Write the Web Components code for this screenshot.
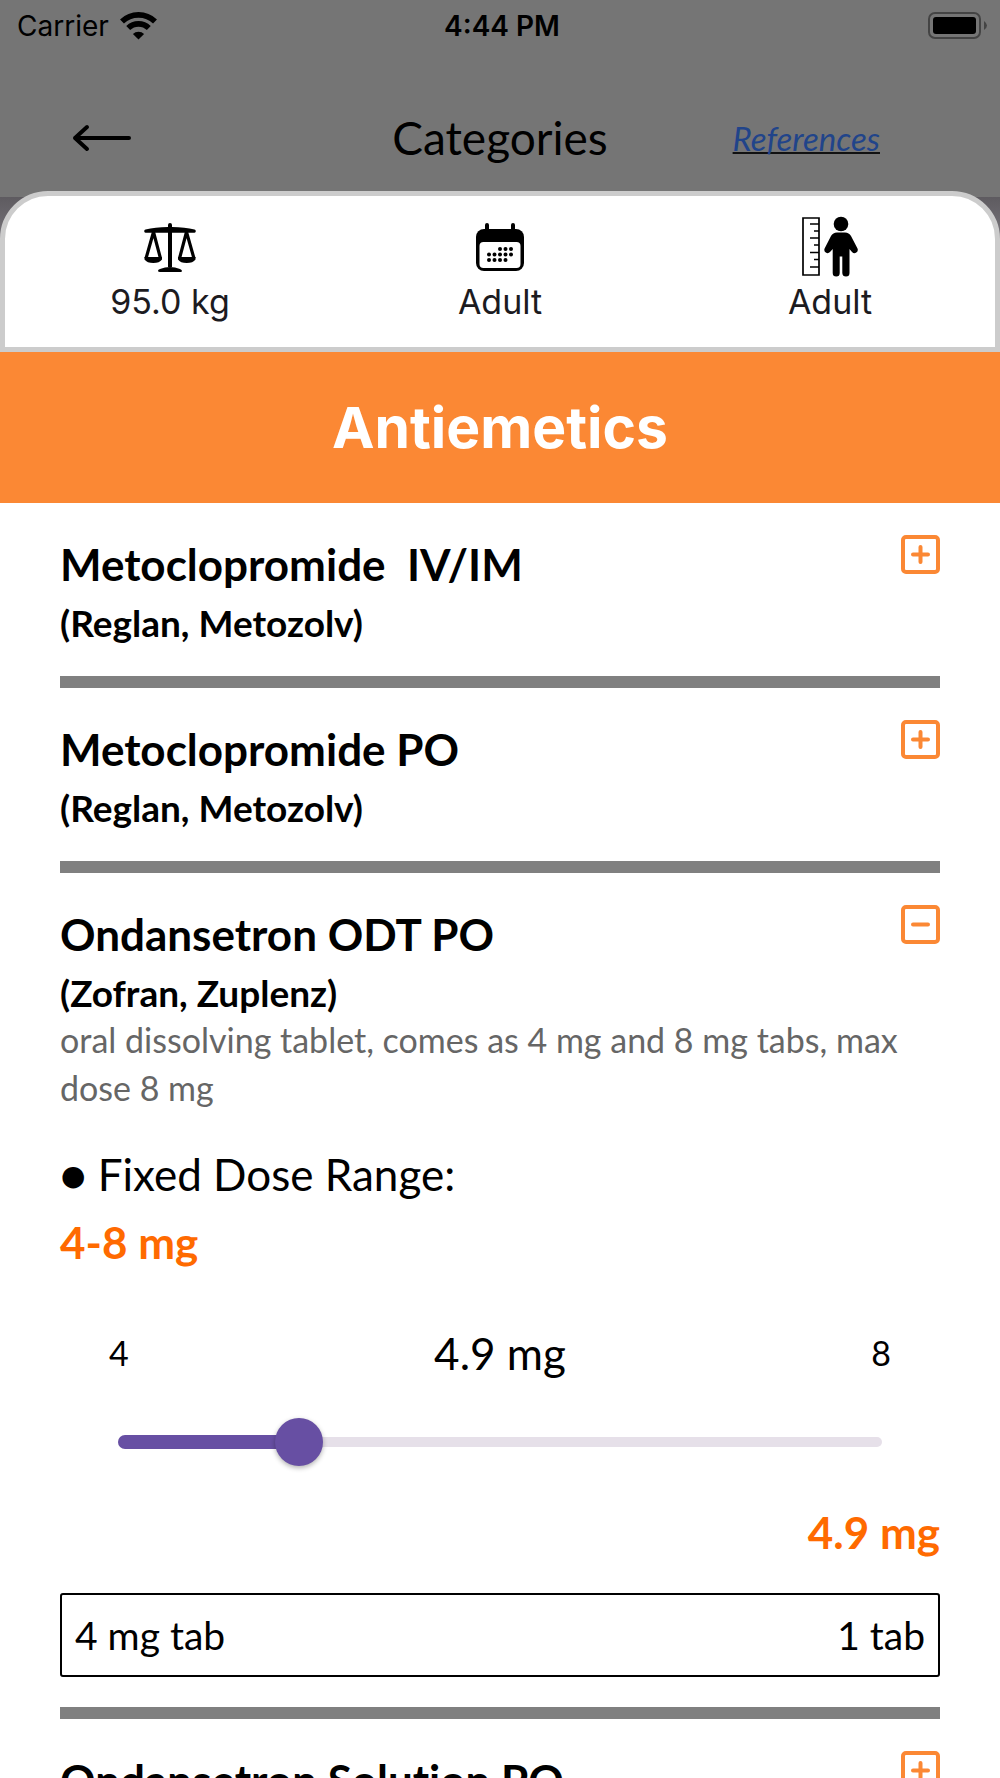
<!DOCTYPE html>
<html lang="en">
<head>
<meta charset="utf-8">
<meta name="viewport" content="width=device-width, initial-scale=1">
<title>Antiemetics</title>
<style>
  body {
    margin: 0;
    height: 100vh;
    display: flex;
    flex-direction: column;
    overflow: hidden;
    background: #fff;
    color: #000;
    font-family: Lato, "Liberation Sans", sans-serif;
    font-variant-ligatures: none;
    --accent: #fb8834;
    --dose: #ff6a00;
    --scrim: #757575;
    --slider: #674fa3;
  }
  main {
    flex: 1;
    min-height: 0;
    overflow-y: auto;
    scrollbar-width: none;
    padding: 0 60px;
  }
</style>
</head>
<body>
  <status-bar carrier="Carrier" time="4:44 PM"></status-bar>
  <nav-header heading="Categories"></nav-header>
  <patient-bar>
    <patient-stat icon="scale">95.0 kg</patient-stat>
    <patient-stat icon="calendar">Adult</patient-stat>
    <patient-stat icon="height">Adult</patient-stat>
  </patient-bar>
  <category-banner>Antiemetics</category-banner>
  <main>
    <drug-item name="Metoclopromide&nbsp; IV/IM" brands="(Reglan, Metozolv)"></drug-item>
    <drug-item name="Metoclopromide PO" brands="(Reglan, Metozolv)"></drug-item>
    <drug-item name="Ondansetron ODT PO" brands="(Zofran, Zuplenz)" open>
      <dose-range low="4" high="8" value="4.875" unit="mg" tab="4 mg tab" count="1 tab">
        oral dissolving tablet, comes as 4 mg and 8 mg tabs, max dose 8 mg
      </dose-range>
    </drug-item>
    <drug-item name="Ondansetron Solution PO" brands="(Zofran)"></drug-item>
  </main>

<script>
class StatusBar extends HTMLElement {
  constructor() {
    super();
    this.root = this.attachShadow({ mode: "open" });
  }

  connectedCallback() {
    this.root.innerHTML = `
      <style>
        :host {
          display: grid;
          grid-template-columns: 1fr auto 1fr;
          align-items: center;
          height: 51px;
          padding: 0 13px 0 17px;
          background: var(--scrim);
          font: 400 28px/32px Inter, "Liberation Sans", sans-serif;
        }
        .carrier { display: flex; align-items: center; gap: 11px; }
        .time { font-weight: 600; }
        .battery { justify-self: end; }
        svg { display: block; }
      </style>
      <div class="carrier">
        <span>${this.getAttribute("carrier")}</span>
        <svg width="37" height="28" viewBox="0 0 37 28" aria-hidden="true">
          <g fill="none" stroke="#000" stroke-width="5.6">
            <path d="M2 9.6a23.6 23.6 0 0 1 33 0"/>
            <path d="M8.2 16a14.8 14.8 0 0 1 20.600 0"/>
          </g>
          <path d="M18.500 27.500l-5.600-5.400a8 8 0 0 1 11.200 0z"/>
        </svg>
      </div>
      <span class="time">${this.getAttribute("time")}</span>
      <svg class="battery" width="59" height="28" viewBox="0 0 59 28" aria-hidden="true">
        <rect x="1" y="1" width="51" height="25" rx="6" fill="none" stroke="#444" stroke-width="2"/>
        <rect x="5" y="5" width="43" height="17" rx="3"/>
        <path d="M56 9q6 4.500 0 9z" fill="#444"/>
      </svg>`;
  }
}

class NavHeader extends HTMLElement {
  constructor() {
    super();
    this.root = this.attachShadow({ mode: "open" });
  }

  connectedCallback() {
    this.root.innerHTML = `
      <style>
        :host {
          display: grid;
          grid-template-columns: 1fr auto 1fr;
          align-items: center;
          height: 140px;
          padding: 34px 60px 0;
          box-sizing: border-box;
          background: var(--scrim);
        }
        button {
          justify-self: start;
          padding: 10px 12px;
          border: 0;
          background: none;
        }
        svg { display: block; }
        h1 { margin: 0; font-size: 46px; font-weight: 400; line-height: 56px; }
        a {
          justify-self: end;
          margin-right: 60px;
          font-size: 33px;
          font-style: italic;
          line-height: 40px;
          color: #21448a;
          text-decoration: underline #111 2px;
          text-underline-offset: 1px;
          text-decoration-skip-ink: none;
        }
      </style>
      <button type="button" aria-label="Back">
        <svg width="60" height="28" viewBox="0 0 60 28" fill="none" stroke="#000" stroke-width="4"
             stroke-linecap="round" stroke-linejoin="round">
          <path d="M3 14h54M15 3L3 14l12 11"/>
        </svg>
      </button>
      <h1>${this.getAttribute("heading")}</h1>
      <a href="#references">References</a>`;
  }
}

class PatientBar extends HTMLElement {
  constructor() {
    super();
    this.root = this.attachShadow({ mode: "open" });
    this.root.innerHTML = `
      <style>
        :host {
          display: block;
          background: linear-gradient(var(--scrim) 6px, #5e5b60 6px, #77747a 48px);
        }
        .sheet {
          display: grid;
          grid-template-columns: repeat(3, 1fr);
          padding: 19px 0 22px;
          border: 5px solid #ccc;
          border-radius: 48px 48px 0 0;
          background: #fff;
        }
      </style>
      <div class="sheet"><slot></slot></div>`;
  }
}

const STAT_ICONS = {
  scale: `
    <svg width="60" height="64" viewBox="0 0 60 64" aria-hidden="true">
      <path d="M28 10q0-2 2-2t2 2v2q13 .3 22.500 2.500a1.700 1.700 0 0 1 0 3.300H5.500a1.700 1.700 0 0 1 0-3.300Q15 12.300 28 12z"/>
      <path d="M28 14h4v38h-4zM20 54q10-4 20 0 2 .8 2 2t-2 1H20q-2 0-2-1.200T20 54z"/>
      <path d="M13.500 17L6 43.500M13.500 17L20.500 43.500M46.500 17L39.500 43.500M46.500 17L54 43.500"
            fill="none" stroke="#000" stroke-width="3.200"/>
      <path d="M4.500 42h17.500v2.500q-2.500 3.500-8.700 3.500T4.500 44.500zM38 42h17.500v2.500Q53 48 46.700 48T38 44.500z"/>
    </svg>`,
  calendar: `
    <svg width="60" height="64" viewBox="0 0 60 64" aria-hidden="true">
      <path d="M17 10v6M43 10v6" stroke="#000" stroke-width="4" stroke-linecap="round"/>
      <rect x="6" y="14" width="48" height="42" rx="8"/>
      <rect x="9.500" y="27" width="41" height="26" rx="4" fill="#fff"/>
      <path d="M30 34h.01M35.500 34h.01M41 34h.01M19 39.500h.01M24.500 39.500h.01M30 39.500h.01M35.500 39.500h.01M41 39.500h.01M19 45h.01M24.500 45h.01M30 45h.01M35.500 45h.01"
            stroke="#000" stroke-width="4" stroke-linecap="round"/>
    </svg>`,
  height: `
    <svg width="60" height="64" viewBox="0 0 60 64" aria-hidden="true">
      <path d="M3 3h16v57H3zM10 9h9M14 16h5M10 23h9M14 30h5M10 37.500h9M14 44.500h5M10 52h9"
            fill="none" stroke="#000" stroke-width="1.700"/>
      <circle cx="41" cy="9" r="7.300"/>
      <path d="M37 17.500h8q4 0 6 3.500l6.500 12.500q1 2.500-1.200 4t-4.300-.6L49.500 34V58q0 3.500-3.500 3.500T42.300 58V41.500h-2.600V58q0 3.500-3.500 3.500T32.700 58V34L30 37q-2 2-4.200.5t-1.200-4L31 21q2-3.500 6-3.500z"/>
    </svg>`,
};

class PatientStat extends HTMLElement {
  constructor() {
    super();
    this.root = this.attachShadow({ mode: "open" });
  }

  connectedCallback() {
    this.root.innerHTML = `
      <style>
        :host {
          display: flex;
          flex-direction: column;
          align-items: center;
          color: #1c1b1f;
          font: 400 34px/46px Inter, "Liberation Sans", sans-serif;
        }
        svg { display: block; }
      </style>
      ${STAT_ICONS[this.getAttribute("icon")]}
      <span><slot></slot></span>`;
  }
}

class CategoryBanner extends HTMLElement {
  constructor() {
    super();
    this.root = this.attachShadow({ mode: "open" });
    this.root.innerHTML = `
      <style>
        :host { display: block; background: var(--accent); color: #fff; }
        h2 {
          margin: 0;
          padding: 44px 0 43px;
          text-align: center;
          font: 700 57px/64px Inter, "Liberation Sans", sans-serif;
        }
      </style>
      <h2><slot></slot></h2>`;
  }
}

class DrugItem extends HTMLElement {
  constructor() {
    super();
    this.root = this.attachShadow({ mode: "open" });
  }

  connectedCallback() {
    this.render();
  }

  render() {
    const open = this.hasAttribute("open");
    this.root.innerHTML = `
      <style>
        :host {
          display: block;
          padding: 32px 0 30px;
          border-bottom: 12px solid #808080;
        }
        header {
          display: flex;
          align-items: flex-start;
          justify-content: space-between;
        }
        h3 { margin: 0 0 7px; font-size: 44px; font-weight: 700; line-height: 58px; }
        p { margin: 0; font-size: 37px; font-weight: 700; line-height: 46px; }
        button { padding: 0; border: 0; background: none; }
        svg { display: block; }
      </style>
      <header>
        <div>
          <h3>${this.getAttribute("name")}</h3>
          <p>${this.getAttribute("brands")}</p>
        </div>
        <button type="button" aria-expanded="${open}" aria-label="Toggle details">
          <svg width="39" height="39" viewBox="0 0 39 39" fill="none" stroke="#fb8834" stroke-width="4"
               stroke-linecap="round">
            <rect x="2" y="2" width="35" height="35" rx="3"/>
            <path d="${open ? "M12 19.500h15" : "M12 19.500h15M19.500 12v15"}"/>
          </svg>
        </button>
      </header>
      ${open ? "<slot></slot>" : ""}`;
    this.root.querySelector("button").addEventListener("click", () => {
      this.toggleAttribute("open");
      this.render();
    });
  }
}

class DoseRange extends HTMLElement {
  constructor() {
    super();
    this.root = this.attachShadow({ mode: "open" });
  }

  connectedCallback() {
    const low = this.getAttribute("low");
    const high = this.getAttribute("high");
    const unit = this.getAttribute("unit");
    this.root.innerHTML = `
      <style>
        :host { display: block; }
        p { margin: 0; }
        .note { font-size: 34px; line-height: 48px; color: #666; }
        .kind { margin-top: 28px; font-size: 44px; line-height: 68px; }
        .dose { font-size: 44px; font-weight: 700; line-height: 68px; color: var(--dose); }
        .scale {
          display: grid;
          grid-template-columns: 1fr auto 1fr;
          align-items: center;
          margin-top: 47px;
          padding: 0 49px;
          font-size: 34px;
          line-height: 60px;
        }
        .scale label { font-size: 44px; }
        .scale :last-child { text-align: right; }
        .slider {
          display: grid;
          align-items: center;
          margin: 35px 58px 0;
        }
        .slider > * { grid-area: 1 / 1; }
        .track { height: 10px; border-radius: 5px; background: #e6e0e9; }
        .fill { height: 14px; border-radius: 7px; background: var(--slider); }
        input {
          appearance: none;
          width: 100%;
          height: 48px;
          margin: 0;
          background: none;
        }
        input::-webkit-slider-thumb {
          appearance: none;
          width: 48px;
          height: 48px;
          border-radius: 50%;
          background: var(--slider);
          box-shadow: 0 2px 5px rgba(0, 0, 0, 0.3);
        }
        .total { margin-top: 32px; text-align: right; }
        .tabs {
          display: flex;
          justify-content: space-between;
          margin-top: 27px;
          padding: 15px 13px;
          border: 2px solid #000;
          border-radius: 3px;
          font-size: 39px;
          line-height: 50px;
        }
      </style>
      <p class="note"><slot></slot></p>
      <p class="kind">● Fixed Dose Range:</p>
      <p class="dose">${low}-${high} ${unit}</p>
      <div class="scale">
        <span>${low}</span>
        <label for="dose"></label>
        <span>${high}</span>
      </div>
      <div class="slider">
        <div class="track"></div>
        <div class="fill"></div>
        <input id="dose" type="range" min="${low}" max="${high}" step="0.125" value="${this.getAttribute("value")}">
      </div>
      <p class="dose total"></p>
      <div class="tabs">
        <span>${this.getAttribute("tab")}</span>
        <span>${this.getAttribute("count")}</span>
      </div>`;

    const input = this.root.querySelector("input");
    const update = () => {
      const text = `${Number(input.value).toFixed(1)} ${unit}`;
      const part = (input.value - low) / (high - low);
      this.root.querySelector("label").textContent = text;
      this.root.querySelector(".total").textContent = text;
      this.root.querySelector(".fill").style.width = `calc((100% - 48px) * ${part} + 24px)`;
    };
    input.addEventListener("input", update);
    update();
  }
}

customElements.define("status-bar", StatusBar);
customElements.define("nav-header", NavHeader);
customElements.define("patient-bar", PatientBar);
customElements.define("patient-stat", PatientStat);
customElements.define("category-banner", CategoryBanner);
customElements.define("drug-item", DrugItem);
customElements.define("dose-range", DoseRange);
</script>
</body>
</html>
